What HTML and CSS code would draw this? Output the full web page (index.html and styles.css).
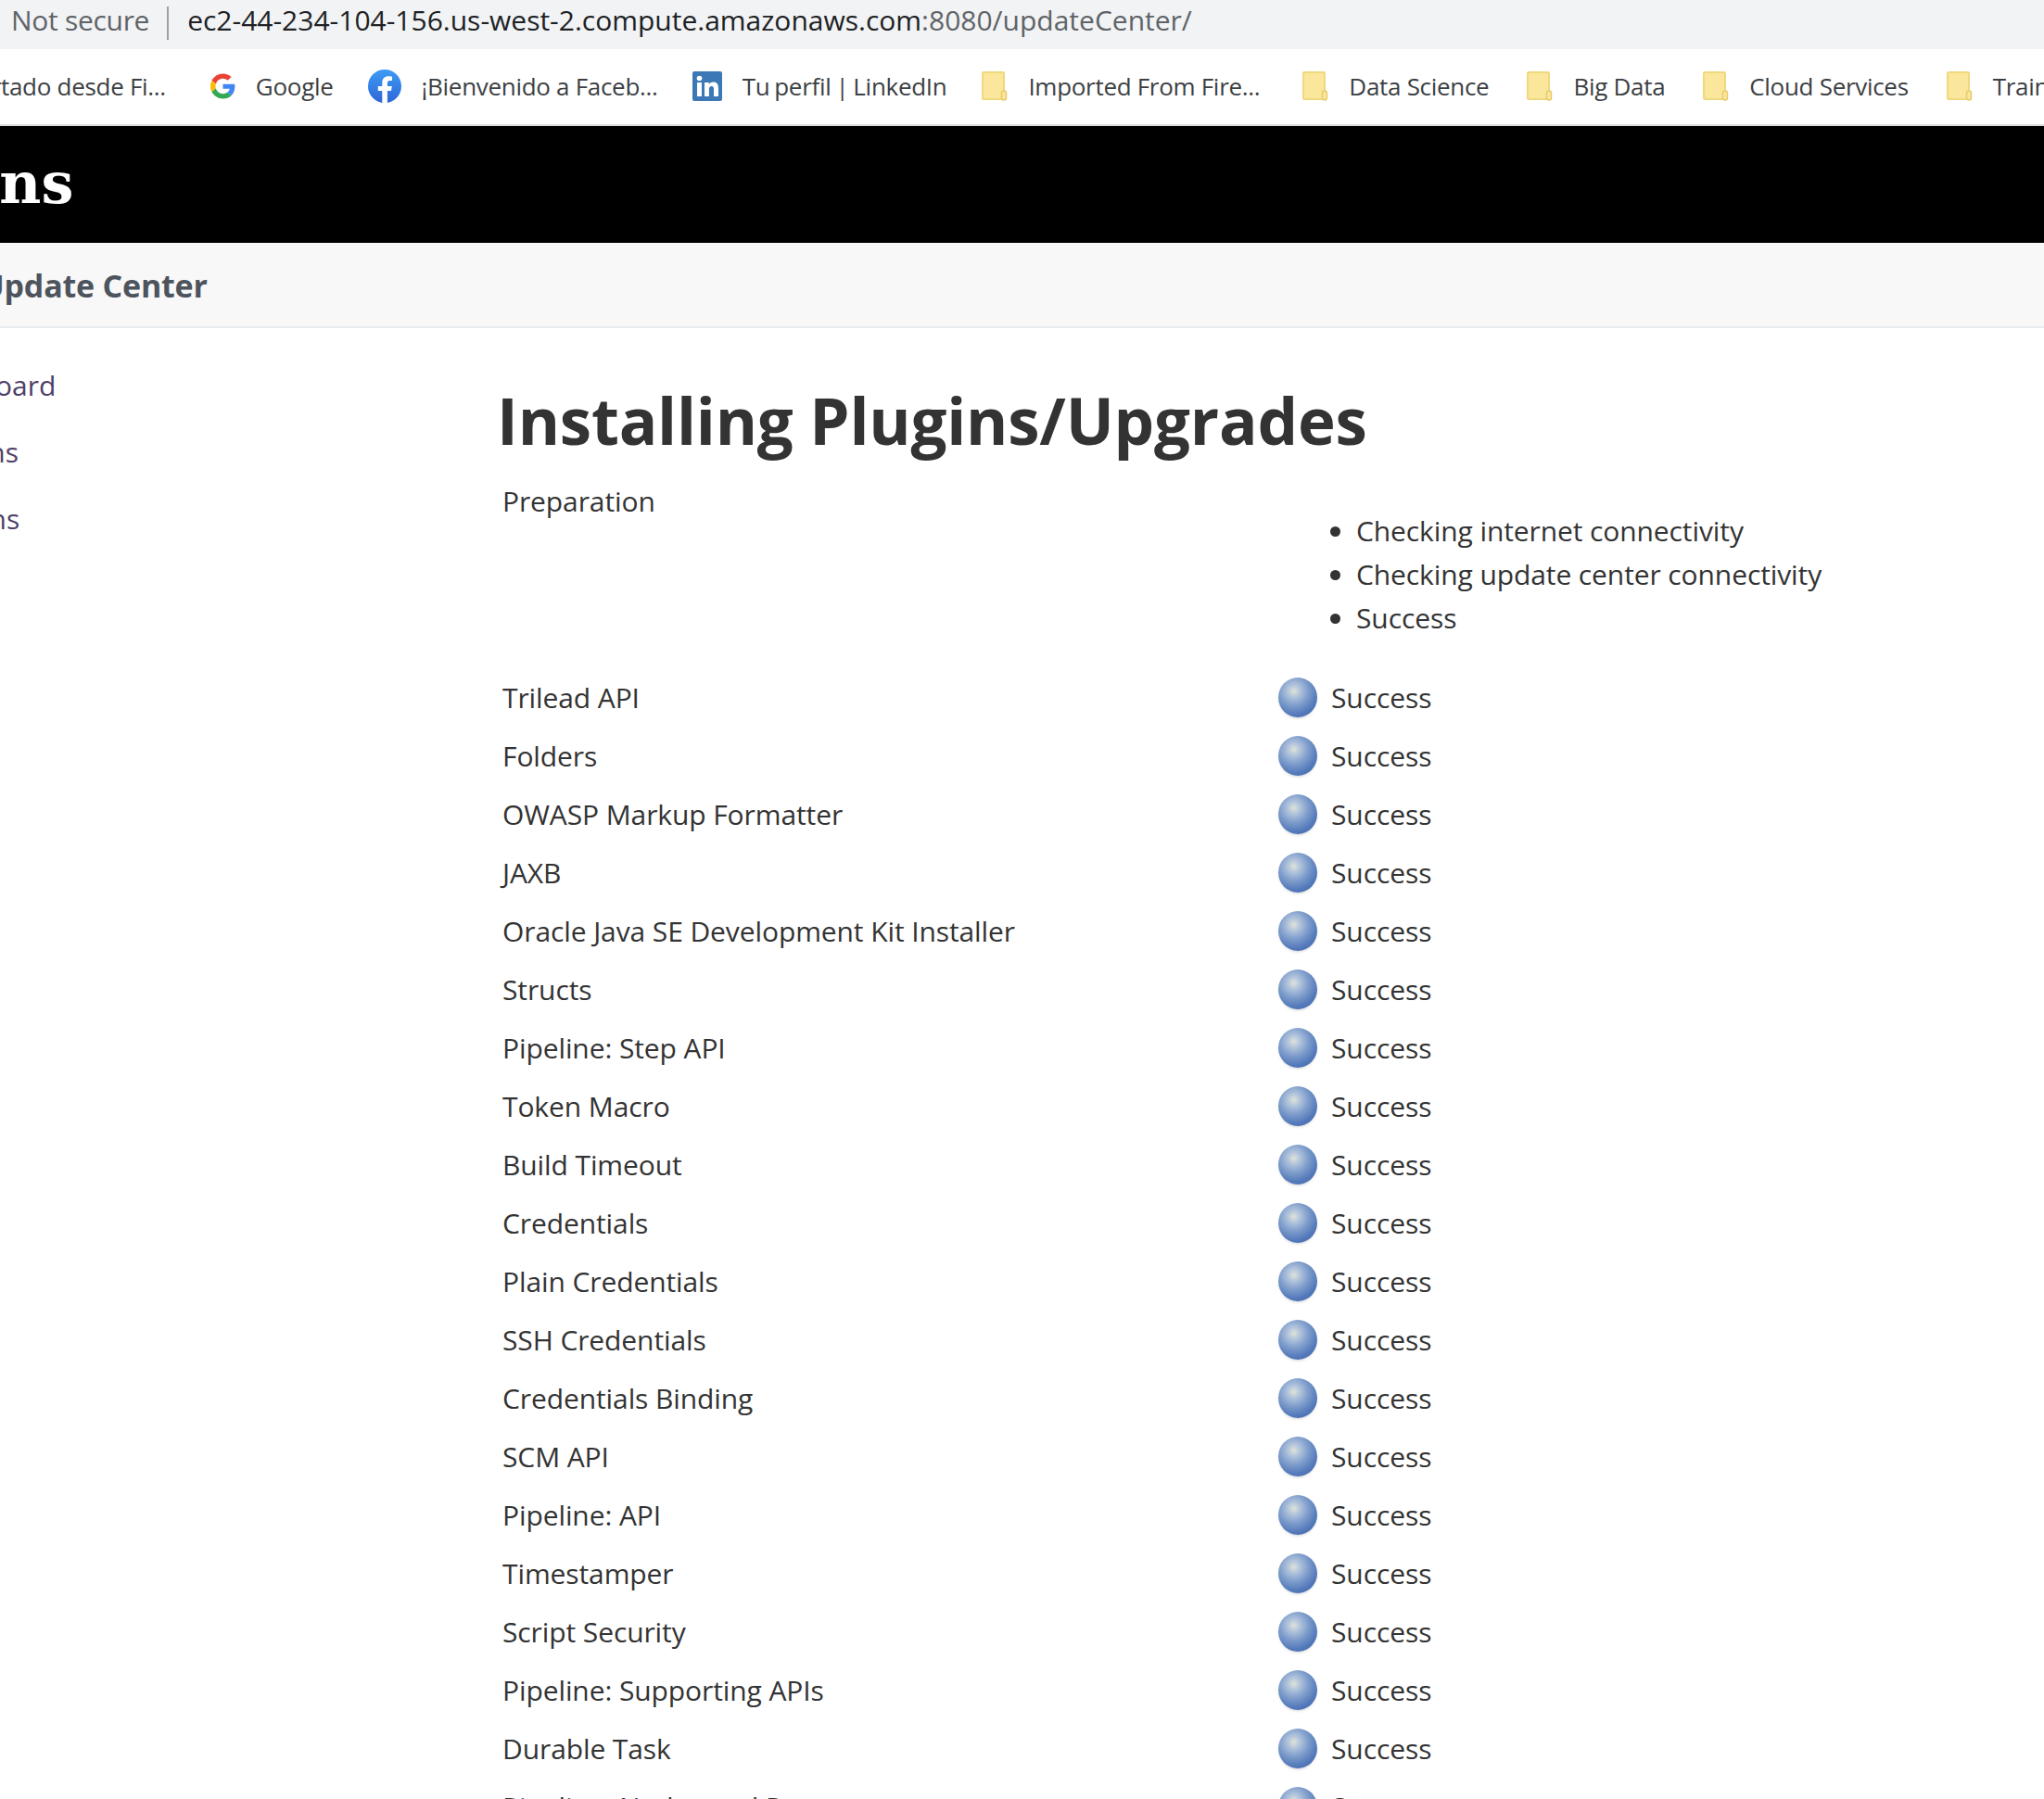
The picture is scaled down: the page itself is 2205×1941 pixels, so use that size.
FILE: index.html
```html
<!DOCTYPE html>
<html lang="en">
<head>
<meta charset="utf-8">
<title>Update Center</title>
<link rel="stylesheet" href="styles.css">
</head>
<body>
<div class="address-bar">
  <span class="not-secure">Not secure</span>
  <span class="divider"></span>
  <span class="url">ec2-44-234-104-156.us-west-2.compute.amazonaws.com<span class="url-path">:8080/updateCenter/</span></span>
</div>
<div class="bookmarks">
  <span class="bookmark first"><span>Importado desde Fi...</span></span>
  <span class="bookmark">
    <svg class="ico-g" viewBox="0 0 48 48"><path fill="#EA4335" d="M24 9.500c3.500 0 6.700 1.200 9.200 3.600l6.900-6.900C35.900 2.400 30.500 0 24 0 14.600 0 6.500 5.400 2.600 13.200l8 6.200C12.400 13.700 17.700 9.500 24 9.500z"/><path fill="#4285F4" d="M46.900 24.500c0-1.600-.1-3.100-.4-4.500H24v9h12.900c-.6 3-2.200 5.500-4.800 7.200l7.700 6c4.500-4.200 7.100-10.300 7.100-17.700z"/><path fill="#FBBC05" d="M10.500 28.600c-.5-1.400-.8-3-.8-4.600s.3-3.200.8-4.600l-8-6.200C.9 16.500 0 20.100 0 24s.9 7.500 2.600 10.800l7.900-6.200z"/><path fill="#34A853" d="M24 48c6.500 0 11.900-2.100 15.900-5.800l-7.700-6c-2.200 1.400-4.900 2.300-8.200 2.300-6.300 0-11.600-4.200-13.500-9.900l-8 6.200C6.500 42.600 14.600 48 24 48z"/></svg>
    <span>Google</span>
  </span>
  <span class="bookmark">
    <svg class="ico-fb" viewBox="0 0 36 36"><defs><linearGradient id="fbg" x1="0" y1="0" x2="0" y2="1"><stop offset="0" stop-color="#3d9cf5"/><stop offset="1" stop-color="#2f66d8"/></linearGradient></defs><circle cx="18" cy="18" r="18" fill="url(#fbg)"/><path fill="#fff" d="M25 23l.8-5h-4.900v-3.400c0-1.400.7-2.700 2.800-2.700H26V7.600S24 7.300 22 7.300c-4.100 0-6.700 2.500-6.700 6.900V18H10.800v5h4.500v12.800c.9.100 1.800.2 2.800.2s1.900-.1 2.800-.2V23z"/></svg>
    <span>¡Bienvenido a Faceb...</span>
  </span>
  <span class="bookmark">
    <svg class="ico-in" viewBox="0 0 32 32"><rect width="32" height="32" rx="2" fill="#3b78b5"/><rect x="5" y="12" width="5" height="15" fill="#fff"/><circle cx="7.500" cy="7.500" r="2.800" fill="#fff"/><path fill="#fff" d="M13 12h4.800v2.100c.8-1.300 2.300-2.500 4.600-2.500 4.200 0 5.600 2.700 5.600 6.800V27h-5v-7.700c0-1.900-.5-3.400-2.400-3.400s-2.700 1.500-2.700 3.400V27H13z"/></svg>
    <span class="tight">Tu perfil | LinkedIn</span>
  </span>
  <span class="bookmark folder folder-first">
    <svg class="ico-folder" viewBox="0 0 28 32"><use href="#folder"/></svg>
    <span>Imported From Fire...</span>
  </span>
  <span class="bookmark folder folder-wide">
    <svg class="ico-folder" viewBox="0 0 28 32"><use href="#folder"/></svg>
    <span>Data Science</span>
  </span>
  <span class="bookmark folder">
    <svg class="ico-folder" viewBox="0 0 28 32"><use href="#folder"/></svg>
    <span>Big Data</span>
  </span>
  <span class="bookmark folder">
    <svg class="ico-folder" viewBox="0 0 28 32"><use href="#folder"/></svg>
    <span>Cloud Services</span>
  </span>
  <span class="bookmark folder">
    <svg class="ico-folder" viewBox="0 0 28 32"><use href="#folder"/></svg>
    <span>Training</span>
  </span>
</div>
<svg class="defs" width="0" height="0"><defs><g id="folder"><path d="M2 1h21a1 1 0 0 1 1 1v28H2a1 1 0 0 1-1-1V2a1 1 0 0 1 1-1z" fill="#fbe79c" stroke="#f0d87f" stroke-width="2"/><rect x="21.500" y="21" width="5" height="10" rx="2.500" fill="#fbe79c" stroke="#e8cb6c" stroke-width="1.500"/></g></defs></svg>
<header class="site-header"><span class="logo">Jenkins</span></header>
<nav class="breadcrumb"><span class="crumb">Update Center</span></nav>
<div class="page">
  <aside class="side">
    <a class="side-link">Back to Dashboard</a>
    <a class="side-link">Manage Jenkins</a>
    <a class="side-link">Manage Plugins</a>
  </aside>
  <main class="main">
    <h1 class="title">Installing Plugins/Upgrades</h1>
    <table class="jobs">
      <tr class="prep"><td>Preparation</td><td><ul class="checks"><li>Checking internet connectivity</li><li>Checking update center connectivity</li><li>Success</li></ul></td></tr>
      <tr><td>Trilead API</td><td><div class="status"><i class="ball"></i>Success</div></td></tr>
      <tr><td>Folders</td><td><div class="status"><i class="ball"></i>Success</div></td></tr>
      <tr><td>OWASP Markup Formatter</td><td><div class="status"><i class="ball"></i>Success</div></td></tr>
      <tr><td>JAXB</td><td><div class="status"><i class="ball"></i>Success</div></td></tr>
      <tr><td>Oracle Java SE Development Kit Installer</td><td><div class="status"><i class="ball"></i>Success</div></td></tr>
      <tr><td>Structs</td><td><div class="status"><i class="ball"></i>Success</div></td></tr>
      <tr><td>Pipeline: Step API</td><td><div class="status"><i class="ball"></i>Success</div></td></tr>
      <tr><td>Token Macro</td><td><div class="status"><i class="ball"></i>Success</div></td></tr>
      <tr><td>Build Timeout</td><td><div class="status"><i class="ball"></i>Success</div></td></tr>
      <tr><td>Credentials</td><td><div class="status"><i class="ball"></i>Success</div></td></tr>
      <tr><td>Plain Credentials</td><td><div class="status"><i class="ball"></i>Success</div></td></tr>
      <tr><td>SSH Credentials</td><td><div class="status"><i class="ball"></i>Success</div></td></tr>
      <tr><td>Credentials Binding</td><td><div class="status"><i class="ball"></i>Success</div></td></tr>
      <tr><td>SCM API</td><td><div class="status"><i class="ball"></i>Success</div></td></tr>
      <tr><td>Pipeline: API</td><td><div class="status"><i class="ball"></i>Success</div></td></tr>
      <tr><td>Timestamper</td><td><div class="status"><i class="ball"></i>Success</div></td></tr>
      <tr><td>Script Security</td><td><div class="status"><i class="ball"></i>Success</div></td></tr>
      <tr><td>Pipeline: Supporting APIs</td><td><div class="status"><i class="ball"></i>Success</div></td></tr>
      <tr><td>Durable Task</td><td><div class="status"><i class="ball"></i>Success</div></td></tr>
      <tr><td>Pipeline: Nodes and Processes</td><td><div class="status"><i class="ball"></i>Success</div></td></tr>
    </table>
  </main>
</div>
</body>
</html>
```
FILE: styles.css
```css
* { box-sizing: border-box; }
html, body { margin: 0; height: 1941px; overflow: hidden; background: #fff; }
body { font-family: "Open Sans", "Noto Sans", sans-serif; color: #333; }

.address-bar { height: 53px; background: #f1f3f4; display: flex; align-items: center; padding: 0 0 10px 12px; font-size: 30px; white-space: nowrap; }
.not-secure { color: #5f6368; letter-spacing: -0.3px; }
.divider { width: 2px; height: 36px; background: #9aa0a6; margin: 6px 20px 0 19px; }
.url { color: #202124; }
.url-path { color: #5f6368; }

.bookmarks { height: 83px; background: #fff; border-bottom: 2px solid #dadce0; display: flex; align-items: center; gap: 37px; font-size: 26px; letter-spacing: -0.3px; color: #3c4043; white-space: nowrap; overflow: hidden; padding-bottom: 2px; }
.bookmark { display: flex; align-items: center; gap: 22px; flex: none; }
.folder { margin-left: 4px; }
.folder-first { margin-left: 1px; }
.folder-wide { margin-left: 9px; }
.first { margin: 0 11px 0 -71px; }
.tight { word-spacing: -1.5px; }
.ico-g { width: 27px; height: 28px; }
.ico-fb { width: 36px; height: 36px; }
.ico-in { width: 32px; height: 32px; }
.ico-folder { width: 28px; height: 32px; }
.defs { position: absolute; }

.site-header { height: 126px; background: #000; overflow: hidden; display: flex; align-items: center; }
.logo { font-family: "DejaVu Serif", serif; font-weight: 700; font-size: 62px; color: #fff; margin-left: -181px; padding-bottom: 4px; }

.breadcrumb { height: 92px; background: #f8f8f8; border-bottom: 2px solid #e9ecef; display: flex; align-items: center; overflow: hidden; padding-top: 2px; }
.crumb { font-weight: 700; font-size: 34px; color: #4d545d; margin-left: -21px; letter-spacing: -0.2px; white-space: nowrap; }

.page { display: flex; }
.side { width: 537px; flex: none; padding-top: 37px; font-size: 30px; overflow: hidden; }
.side-link { display: block; height: 72px; line-height: 50px; color: #4f4068; white-space: nowrap; margin-left: -193px; word-spacing: -6px; }

.main { flex: 1; padding-top: 53px; }
.title { margin: 0 0 9px -1px; font-size: 69px; font-weight: 700; line-height: 92px; color: #333; letter-spacing: -0.2px; white-space: nowrap; }

.jobs { border-collapse: collapse; font-size: 30px; letter-spacing: -0.1px; margin-left: 2px; }
.jobs td { padding: 0 3px; height: 63px; vertical-align: middle; white-space: nowrap; }
.jobs td:first-child { width: 837px; }
.prep td { vertical-align: top; height: 213px; padding-top: 12px; }
.checks { margin: 29px 0 0; padding: 0 0 0 84px; }
.checks li { height: 47px; line-height: 47px; }
.status { display: flex; align-items: center; gap: 15px; }
.ball { width: 42px; height: 43px; flex: none; border-radius: 50%; background: radial-gradient(circle at 40% 34%, #dfe3d8 0, #b0c3dc 18%, #7d9ccb 42%, #5379ba 68%, #3d61a6 100%); box-shadow: 0 2px 3px -1px rgba(120, 120, 120, .3); }
```
